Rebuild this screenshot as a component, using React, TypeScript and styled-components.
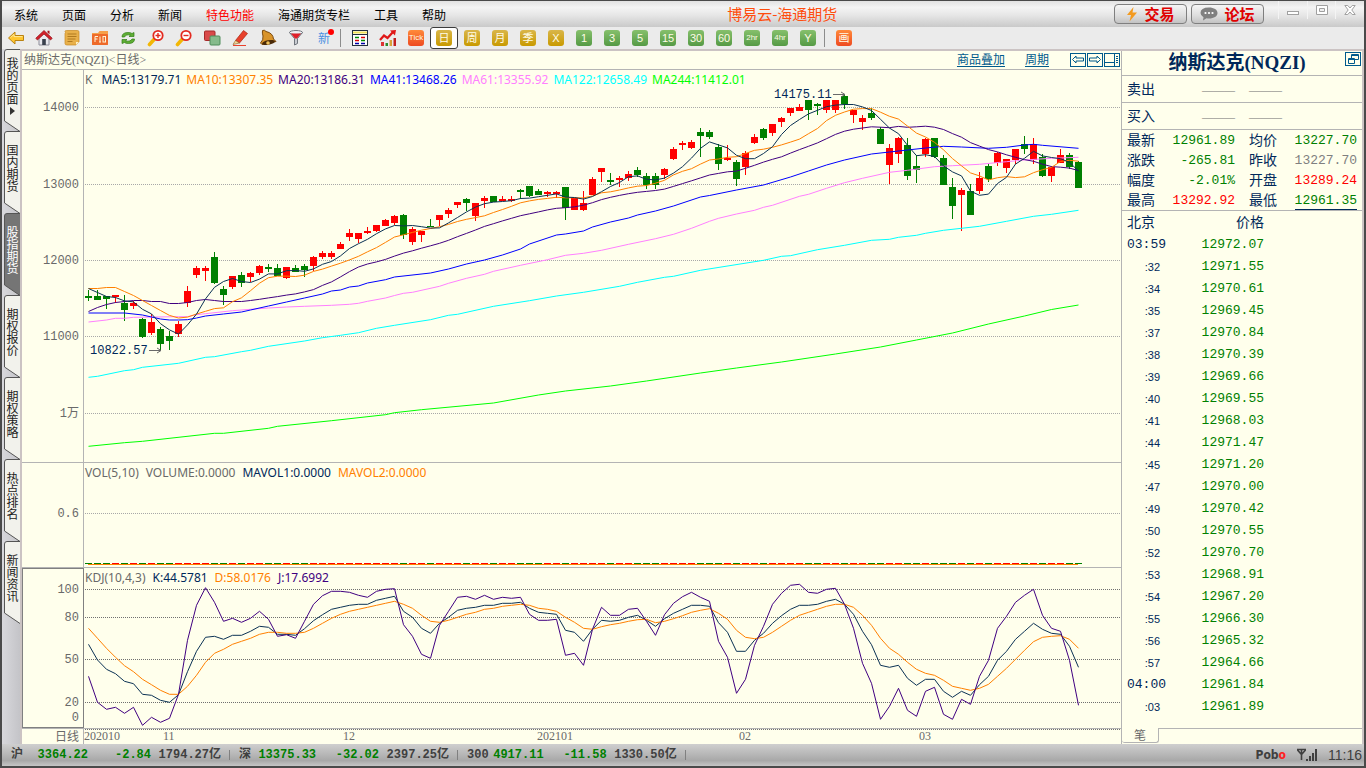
import React from 'react';
import styled, { createGlobalStyle, css } from 'styled-components';

const song = '"Liberation Serif", "Noto Sans CJK SC", serif';
const hei = '"Noto Sans CJK SC", sans-serif';
const humanist = '"Noto Sans", "Open Sans", sans-serif';
const mono = '"Liberation Mono", "Noto Sans CJK SC", monospace';

const c = {
  paper: '#ffffec',
  line: '#b4b4b4',
  frame: '#4a4a4a',
  edge: '#cbc3c3',
  grey: '#696969',
  navy: '#00285a',
  orange: '#ff8000',
  violet: '#400080',
  blue: '#0000ff',
  pink: '#ff80ff',
  cyan: '#00ffff',
  lime: '#00ff00',
  red: '#ff0000',
  green: '#008000',
  link: '#005a8c',
};

const GlobalStyle = createGlobalStyle`
  * { box-sizing: border-box; }
  body { margin: 0; }
  button { margin: 0; padding: 0; border: 0; background: none; font: inherit; color: inherit; }
`;

/* ---------- frame ---------- */

const Window = styled.div`
  display: flex;
  flex-direction: column;
  min-height: 100vh;
  border: 2px solid ${c.frame};
  border-top-width: 1px;
  background: #ebebeb;
  font-family: ${hei};
  font-size: 12px;
`;

const MenuBar = styled.header`
  display: flex;
  height: 26px;
  background: linear-gradient(#e2e2e2, #f4f4f4 25%, #e6e6e6 55%, #c9c9c9);
`;

const Menu = styled.nav`
  display: flex;
  align-items: center;
  gap: 24px;
  padding: 2px 0 0 12px;
`;

const MenuItem = styled.button<{ $hot?: boolean }>`
  color: ${(p) => (p.$hot ? c.red : '#000')};
  line-height: 16px;
`;

const AppTitle = styled.h1`
  flex: 1;
  margin: 0;
  padding-left: 281px;
  font-size: 15px;
  font-weight: 400;
  line-height: 25px;
  color: #ff4d0d;
`;

const TopActions = styled.div`
  display: flex;
  gap: 4px;
  padding: 3px 14px 0 0;
`;

const PillButton = styled.button`
  display: flex;
  align-items: center;
  justify-content: center;
  gap: 6px;
  width: 73px;
  height: 20px;
  border: 1px solid #7f7f7f;
  border-radius: 4px;
  background: linear-gradient(#f6f6f6, #dcdcdc 60%, #c3c3c3);
  color: #e00000;
  font-size: 15px;
  font-weight: 700;
  line-height: 18px;
`;

const WindowControls = styled.div`
  display: flex;
  width: 86px;
  height: 18px;
`;

const WindowButton = styled.button`
  flex: 1;
  display: flex;
  align-items: center;
  justify-content: center;
  border-left: 1px solid #f4f4f4;
`;

const Toolbar = styled.div`
  display: flex;
  align-items: center;
  height: 24px;
  border-bottom: 2px solid ${c.edge};
  background: #ebebeb;
`;

const ToolButton = styled.button<{ $active?: boolean }>`
  display: flex;
  align-items: center;
  justify-content: center;
  width: 28px;
  height: 22px;
  ${(p) =>
    p.$active &&
    css`
      border: 1px solid #3c3c3c;
      border-radius: 3px;
      background: #fff;
    `}
`;

const ToolDivider = styled.span`
  width: 6px;
  height: 18px;
  margin-left: 2px;
  border-left: 1px solid #8c8c8c;
`;

const tones = {
  gold: 'linear-gradient(#d9b64a, #c99a00)',
  green: 'linear-gradient(#86c06c, #559a45)',
  fire: 'linear-gradient(#ff8a3a, #ee4a20)',
};

const Badge = styled.span<{ $tone: keyof typeof tones; $small?: boolean }>`
  width: 16px;
  height: 16px;
  border-radius: 3px;
  background: ${(p) => tones[p.$tone]};
  color: #fffbe6;
  font-family: "Liberation Sans", "Noto Sans CJK SC", sans-serif;
  font-size: ${(p) => (p.$small ? 8 : 11)}px;
  line-height: 16px;
  text-align: center;
`;

const NewMark = styled.span`
  position: relative;
  color: #4a90e2;
  font-size: 12px;
  line-height: 20px;
  &::after {
    content: '';
    position: absolute;
    top: 1px;
    right: -4px;
    width: 6px;
    height: 6px;
    border-radius: 50%;
    background: #ff0000;
  }
`;

const Main = styled.main`
  flex: 1;
  display: flex;
  border-right: 2px solid ${c.edge};
`;

/* ---------- left tabs ---------- */

const SideTabs = styled.nav`
  display: flex;
  flex-direction: column;
  width: 20px;
  margin-top: -2px;
  border-right: 2px solid ${c.edge};
  padding-left: 2px;
  background: linear-gradient(90deg, #d8d8dc, #c4c4c8);
`;

const SideTab = styled.button<{ $active?: boolean }>`
  position: relative;
  height: 82px;
  padding-bottom: 8px;
  color: ${(p) => (p.$active ? '#fff' : '#222')};
`;

const TabShape = styled.svg`
  position: absolute;
  left: 0;
  top: 0;
`;

const TabText = styled.span`
  display: flex;
  flex-direction: column;
  align-items: center;
  justify-content: center;
  gap: 2px;
  position: relative;
  height: 100%;
  font-size: 12px;
  line-height: 12px;
`;

const TabChars = styled.span`
  writing-mode: vertical-rl;
  line-height: 16px;
  height: 48px;
`;

/* ---------- charts ---------- */

const ChartArea = styled.section`
  flex: 1;
  min-width: 0;
  display: flex;
  flex-direction: column;
  background: ${c.paper};
  overflow: hidden;
`;

const ChartHeader = styled.div`
  display: flex;
  align-items: center;
  height: 19px;
  padding: 0 1px 0 2px;
  border-bottom: 1px solid ${c.line};
  font-family: ${song};
`;

const ChartName = styled.h2`
  flex: 1;
  margin: 0;
  font-size: 12px;
  font-weight: 400;
  line-height: 18px;
  color: ${c.grey};
`;

const HeaderLinks = styled.div`
  display: flex;
  gap: 20px;
  padding-right: 21px;
`;

const HeaderLink = styled.a`
  color: ${c.link};
  text-decoration: underline;
  text-underline-offset: 2px;
  line-height: 18px;
`;

const BoxButtons = styled.div`
  display: flex;
  gap: 1px;
`;

const BoxButton = styled.button`
  display: flex;
  width: 16px;
  height: 14px;
`;

const Panel = styled.div<{ $height?: number }>`
  display: grid;
  grid-template-columns: 62px 1fr;
  grid-template-rows: minmax(0, 1fr);
  border-bottom: 1px solid ${c.line};
  ${(p) =>
    p.$height
      ? css`
          height: ${p.$height}px;
        `
      : css`
          flex: 1;
          min-height: 393px;
        `}
`;

const Axis = styled.div<{ $boxed?: boolean }>`
  ${(p) => (p.$boxed ? 'border: 1px solid #808080;' : `border-right: 1px solid ${c.line};`)}
`;

const AxisSvg = styled.svg`
  display: block;
  width: 100%;
  height: 100%;
  overflow: visible;
  text {
    font-family: ${mono};
    font-size: 12px;
    fill: ${c.grey};
    text-anchor: end;
  }
`;

const Plot = styled.div`
  display: flex;
  flex-direction: column;
  min-width: 0;
`;

const Legend = styled.div<{ $gap: number }>`
  display: flex;
  gap: ${(p) => p.$gap}px;
  height: 18px;
  padding-left: 1px;
  font-family: ${humanist};
  font-size: 12px;
  line-height: 19px;
  white-space: nowrap;
`;

const LegendItem = styled.span<{ $color: string; $wide?: boolean }>`
  color: ${(p) => p.$color};
  ${(p) => p.$wide && 'padding-right: 4px;'}
`;

const PlotSvg = styled.svg`
  display: block;
  flex: 1;
  width: 100%;
  min-height: 0;
  overflow: visible;
  text {
    font-family: ${mono};
    font-size: 12px;
    fill: ${c.navy};
  }
`;

const TimeRow = styled.div`
  display: grid;
  grid-template-columns: 62px 1fr;
  height: 15px;
`;

const TimeUnit = styled.span`
  padding-right: 4px;
  border-right: 1px solid ${c.line};
  color: ${c.grey};
  font-size: 12px;
  line-height: 14px;
  text-align: right;
`;

const TimeSvg = styled.svg`
  display: block;
  width: 100%;
  height: 15px;
  text {
    font-family: ${song};
    font-size: 12px;
    fill: ${c.grey};
  }
`;

/* ---------- quote side ---------- */

const QuotePane = styled.aside`
  display: flex;
  flex-direction: column;
  width: 241px;
  border-left: 1px solid ${c.line};
  background: ${c.paper};
  font-family: ${mono};
  color: ${c.navy};
`;

const QuoteHead = styled.div`
  display: flex;
  position: relative;
  justify-content: center;
  height: 25px;
  border-bottom: 1px solid ${c.line};
`;

const QuoteName = styled.h2`
  margin: 0;
  padding-right: 10px;
  font-family: ${song};
  font-size: 19px;
  font-weight: 700;
  line-height: 24px;
`;

const CascadeButton = styled.button`
  position: absolute;
  top: 1px;
  right: 1px;
  display: flex;
`;

const BookRow = styled.div`
  display: grid;
  grid-template-columns: 75px 47px 1fr;
  align-items: center;
  height: 27px;
  padding: 2px 0 0 5px;
  border-bottom: 1px solid ${c.line};
  font-size: 14px;
  line-height: 24px;
`;

const Dashes = styled.span`
  color: #707070;
  font-family: ${song};
  font-size: 11px;
`;

const QuoteTable = styled.table`
  width: 236px;
  margin-left: 5px;
  table-layout: fixed;
  border-collapse: collapse;
  th,
  td {
    height: 20px;
    padding: 2px 0 0;
    line-height: 18px;
  }
  th {
    font-size: 14px;
    font-weight: 400;
    text-align: left;
  }
  td {
    font-size: 13px;
    text-align: right;
  }
`;

const LabelPad = styled.span`
  padding-left: 14px;
`;

const Num = styled.span<{ $color: string; $mark?: boolean }>`
  display: inline-block;
  color: ${(p) => p.$color};
  line-height: ${(p) => (p.$mark ? 16 : 18)}px;
  ${(p) => p.$mark && `border-bottom: 1px solid ${c.navy};`}
`;

const TickArea = styled.div`
  flex: 1;
  border-top: 1px solid ${c.line};
`;

const TickTable = styled.table`
  width: 137px;
  margin: 1px 0 0 5px;
  table-layout: fixed;
  border-collapse: collapse;
  th,
  td {
    height: 22px;
    padding: 0;
    line-height: 22px;
  }
  th {
    font-size: 14px;
    font-weight: 400;
    text-align: left;
  }
  th:last-child {
    text-align: right;
  }
`;

const TimeCell = styled.td<{ $minute: boolean }>`
  ${(p) =>
    p.$minute
      ? 'font-size: 13px;'
      : 'font-family: "Liberation Sans", sans-serif; font-size: 11px; text-align: right;'}
`;

const PriceCell = styled.td`
  color: ${c.green};
  font-size: 13px;
  text-align: right;
`;

const TimeText = styled.span<{ $minute: boolean }>`
  padding-right: ${(p) => (p.$minute ? 0 : 7)}px;
`;

const PaneTabs = styled.div`
  display: flex;
  height: 16px;
`;

const PaneTab = styled.button`
  width: 37px;
  height: 15px;
  border: 1px solid ${c.line};
  border-width: 0 1px 1px 0;
  border-radius: 0 0 3px 3px;
  color: ${c.grey};
  font-family: ${hei};
  font-size: 12px;
  line-height: 14px;
`;

const PaneTabLine = styled.span`
  flex: 1;
  border-top: 1px solid ${c.line};
`;

/* ---------- status bar ---------- */

const StatusBar = styled.footer`
  display: flex;
  align-items: center;
  height: 22px;
  padding: 0 2px 0 9px;
  background: linear-gradient(#cfcfcf, #b0b0b0 60%, #a8a8a8 75%, #c6c6c6);
  color: #404040;
  font-family: ${mono};
  font-size: 12px;
  font-weight: 700;
  line-height: 24px;
  white-space: nowrap;
`;

const IndexGroup = styled.div`
  display: flex;
  padding-right: 9px;
  margin-right: 9px;
  background: linear-gradient(#808080, #808080) right center / 1px 10px no-repeat;
`;

const IndexPrice = styled.span<{ $width: number }>`
  width: ${(p) => p.$width}px;
  color: ${c.green};
  text-align: right;
`;

const IndexChange = styled.span`
  width: 63px;
  color: ${c.green};
  text-align: right;
`;

const IndexVolume = styled.span`
  width: 70px;
  text-align: right;
`;

const StatusRight = styled.div`
  display: flex;
  align-items: center;
  gap: 10px;
  margin-left: auto;
  font-family: "Liberation Sans", sans-serif;
  font-weight: 400;
  font-size: 14px;
`;

const Brand = styled.span`
  font-family: "DejaVu Sans Condensed", "DejaVu Sans", sans-serif;
  font-size: 12px;
  font-weight: 700;
  em {
    color: #ff2020;
    font-style: normal;
  }
`;

/* ---------- market data ---------- */

const STEP = 9;
const FIRST = 4;
const cx = (i: number) => FIRST + STEP * i + 0.5;

type Bar = [up: 0 | 1, high: number, top: number, bottom: number, low: number];

const R = 1;
const G = 0;

const bars: Bar[] = [
  [G, 290, 296, 298, 301], [G, 290, 296, 300, 300], [G, 296, 296, 299, 309], [R, 295, 295, 297, 303],
  [G, 295, 303, 310, 321], [R, 301, 303, 306, 309], [G, 318, 319, 337, 338], [R, 314, 322, 333, 335],
  [G, 327, 329, 344, 351], [G, 331, 336, 341, 350], [R, 321, 324, 334, 337], [R, 286, 291, 303, 307],
  [R, 266, 268, 275, 278], [R, 266, 268, 271, 281], [G, 252, 257, 283, 284], [G, 286, 289, 295, 305],
  [R, 276, 276, 287, 289], [G, 272, 275, 283, 287], [R, 272, 273, 277, 282], [R, 265, 266, 273, 275],
  [G, 264, 267, 269, 272], [G, 264, 268, 276, 276], [R, 267, 267, 278, 279], [G, 265, 268, 272, 272],
  [G, 264, 266, 270, 277], [R, 256, 257, 266, 271], [R, 251, 253, 257, 259], [R, 251, 253, 257, 259],
  [R, 242, 244, 249, 249], [R, 229, 233, 237, 241], [R, 233, 233, 239, 243], [R, 227, 231, 233, 234],
  [R, 225, 225, 231, 232], [R, 219, 220, 226, 226], [R, 215, 216, 223, 225], [G, 214, 215, 235, 239],
  [R, 227, 229, 242, 245], [R, 231, 231, 235, 242], [G, 219, 226, 227, 227], [R, 215, 215, 220, 226],
  [R, 208, 210, 214, 218], [R, 202, 202, 205, 208], [G, 198, 199, 203, 211], [R, 203, 203, 216, 221],
  [R, 196, 198, 201, 208], [G, 196, 196, 202, 202], [R, 196, 199, 201, 201], [R, 196, 199, 201, 202],
  [G, 189, 190, 192, 199], [G, 186, 186, 196, 197], [G, 189, 191, 195, 195], [R, 191, 192, 194, 197],
  [R, 191, 192, 194, 198], [G, 187, 187, 208, 220], [R, 198, 198, 210, 210], [R, 191, 203, 210, 211],
  [R, 177, 179, 195, 195], [R, 168, 168, 172, 182], [G, 173, 180, 182, 185], [R, 176, 178, 180, 187],
  [R, 171, 174, 178, 181], [G, 167, 170, 175, 177], [G, 173, 176, 185, 189], [G, 173, 176, 185, 189],
  [R, 168, 169, 175, 179], [R, 147, 149, 159, 160], [R, 141, 143, 145, 150], [R, 140, 142, 148, 149],
  [G, 128, 132, 136, 157], [G, 130, 132, 137, 139], [G, 144, 147, 164, 170], [R, 145, 158, 160, 161],
  [G, 160, 162, 179, 186], [R, 151, 153, 167, 175], [R, 134, 137, 143, 144], [G, 128, 129, 138, 140],
  [R, 124, 124, 133, 136], [R, 117, 118, 122, 127], [R, 108, 108, 113, 116], [R, 104, 107, 111, 111],
  [G, 100, 100, 110, 120], [G, 103, 104, 106, 115], [R, 100, 100, 110, 113], [R, 100, 100, 110, 113],
  [G, 94, 96, 104, 109], [R, 110, 110, 115, 123], [R, 115, 118, 122, 130], [G, 108, 113, 118, 120],
  [G, 127, 129, 144, 144], [R, 144, 148, 165, 184], [R, 137, 138, 154, 163], [G, 138, 145, 176, 180],
  [G, 155, 166, 170, 183], [R, 138, 139, 154, 157], [G, 138, 138, 157, 158], [G, 155, 158, 185, 185],
  [G, 178, 187, 206, 219], [R, 188, 190, 195, 231], [G, 184, 191, 215, 215], [R, 172, 178, 191, 194],
  [G, 164, 166, 179, 182], [R, 152, 153, 163, 166], [R, 159, 159, 168, 173], [R, 149, 149, 160, 164],
  [G, 136, 144, 149, 154], [R, 138, 144, 160, 164], [G, 154, 157, 176, 177], [R, 166, 167, 176, 182],
  [R, 149, 155, 163, 163], [G, 153, 155, 167, 169], [G, 161, 162, 188, 188],
];

/* Bars and averages share one vertical scale; the plot begins at level 88, its axis at 70. */
const PLOT_TOP = 88;
const AXIS_TOP = 70;

const closes = bars.map(([up, , top, bottom]) => (up ? top : bottom));

/* Averages need earlier sessions for their first values, which are given as lead. */
const average = (n: number, lead: number[]) =>
  closes.map((_, i) =>
    i < lead.length ? lead[i] : closes.slice(i - n + 1, i + 1).reduce((a, b) => a + b, 0) / n,
  );

const everyBar = (ys: number[]) => ys.map((y, i) => `${cx(i)},${(y + 0.5 - PLOT_TOP).toFixed(1)}`).join(' ');
const atBars = (pts: number[][]) => pts.map(([i, y]) => `${cx(i)},${y - PLOT_TOP}`).join(' ');

const ma5 = average(5, [288, 292, 296, 297]);
const ma10 = average(10, [288, 288, 287, 287, 291, 295, 300, 305, 310]);
const ma20 = average(20, [311, 307, 304, 302, 301, 300, 300, 301, 301, 303, 303, 302, 300, 299, 300, 301, 301, 301, 300]);

const ma41 = [
  [0, 313], [4, 313], [6, 315], [7, 317], [8, 319], [9, 320], [10, 320], [11, 319.7], [12, 318], [13, 316], [15, 314],
  [17, 312], [18, 310], [20, 306], [22, 302], [24, 298], [26, 294], [27, 291], [28, 290], [29, 287], [30, 286],
  [31, 283], [33, 279.7], [34, 277], [38, 273], [40, 269], [42, 264], [44, 260], [46, 255], [48, 249], [49, 244],
  [52, 235], [53, 234], [55, 231], [56, 227], [58, 222], [60, 218], [61, 215], [63, 211], [65, 206], [68, 197],
  [69, 195.5], [72, 190], [75, 185], [78, 177], [80, 171], [82, 165], [84, 160], [87, 154], [89, 152], [91, 150],
  [93, 148], [95, 146.3], [97, 147], [100, 148.3], [102, 147.3], [104, 145], [105, 144.3], [106, 145.3], [110, 148.3],
];
const ma61 = [
  [0, 322], [2, 320], [3, 318.3], [4, 318.3], [5, 317.3], [10, 316.7], [11, 316.7], [12, 314.7], [13, 313.7],
  [16, 310.7], [18, 309.3], [20, 308], [22, 307], [24, 306.3], [27, 305.3], [29, 304.3], [30, 303.3], [31, 301.3],
  [33, 298], [34, 295.5], [35, 293.3], [36, 292.3], [39, 286.3], [40, 283.3], [42, 278.3], [44, 274.3], [45, 271.3],
  [48, 265.3], [51, 259.7], [53, 255.3], [55, 253.3], [57, 250.3], [60, 244.3], [63, 238.7], [65, 234.3], [67, 228.3],
  [69, 221.3], [70, 218.3], [72, 214], [74, 210.3], [75, 207.3], [76, 205.3], [79, 196.3], [80, 194.3], [82, 188.3],
  [84, 182.7], [86, 178.3], [89, 172.3], [91, 170.3], [94, 166.7], [96, 165.7], [99, 164.3], [102, 161.7], [104, 160],
  [107, 158.3], [110, 157.3],
];
const ma122 = [
  [0, 377.3], [1, 376.3], [4, 370.7], [5, 369.7], [6, 367.3], [10, 363.3], [13, 357.3], [14, 356.7], [17, 351.7],
  [18, 350.3], [20, 346.3], [24, 341], [26, 337.7], [28, 335.3], [30, 332.7], [32, 328.3], [34, 325.3], [38, 319.7],
  [40, 315.3], [41, 314.3], [45, 306.3], [49, 300.7], [52, 296], [55, 292.3], [59, 286.3], [61, 282.3], [64, 277.3],
  [65, 276.3], [68, 270.3], [75, 260.3], [77, 256.3], [78, 255.7], [81, 249.7], [84, 245.3], [87, 240.3], [89, 239.3],
  [90, 237.3], [92, 235.3], [93, 233.3], [95, 230.3], [99, 226.3], [102, 221.3], [105, 216.3], [107, 214.3], [110, 210.3],
];
const ma244 = [
  [0, 446.3], [4, 442.7], [6, 441.3], [14, 433.3], [15, 433.3], [20, 428.3], [21, 426.3], [27, 420.7], [33, 414.7],
  [34, 412.7], [37, 409.7], [45, 403], [50, 395], [53, 391], [58, 386], [62, 381], [68, 373], [72, 368], [77, 362],
  [83, 354], [88, 347], [92, 340], [96, 333], [100, 324], [104, 316], [107, 309.5], [110, 305],
];

const priceLines = [
  { color: c.lime, points: atBars(ma244) },
  { color: c.cyan, points: atBars(ma122) },
  { color: c.pink, points: atBars(ma61) },
  { color: c.blue, points: atBars(ma41) },
  { color: c.violet, points: everyBar(ma20) },
  { color: c.orange, points: everyBar(ma10) },
  { color: '#0b3254', points: everyBar(ma5) },
];

const priceTicks = [
  { label: '14000', y: 107 }, { label: '13000', y: 184 }, { label: '12000', y: 260 },
  { label: '11000', y: 336 }, { label: '1万', y: 413 },
];

/* Oscillator samples, three units to the pixel. */
const kLine = [
  253, 300, 328, 341, 364, 371, 403, 406, 421, 427, 404, 335, 274, 232, 229, 238, 226, 226, 214, 199, 202, 223, 223,
  226, 206, 182, 164, 148, 142, 136, 133, 133, 121, 115, 109, 154, 172, 205, 220, 190, 172, 151, 145, 142, 136, 136,
  130, 130, 127, 145, 157, 160, 163, 211, 217, 244, 208, 181, 184, 181, 172, 166, 181, 199, 176, 160, 148, 136, 136,
  139, 188, 217, 274, 274, 241, 220, 190, 167, 148, 136, 136, 133, 124, 118, 133, 163, 214, 254, 316, 322, 316, 355,
  376, 358, 358, 394, 412, 394, 406, 374, 349, 301, 274, 238, 214, 190, 208, 220, 223, 259, 322,
];
const dLine = [
  205, 235, 265, 292, 317, 335, 358, 374, 391, 403, 403, 379, 346, 307, 280, 268, 253, 244, 235, 223, 217, 217, 220,
  220, 217, 205, 190, 175, 163, 154, 148, 142, 136, 130, 124, 133, 145, 166, 184, 187, 181, 172, 163, 157, 148, 145,
  139, 136, 133, 136, 145, 148, 154, 172, 187, 205, 208, 200, 194, 190, 184, 179, 178, 188, 184, 176, 167, 157, 151,
  146, 160, 178, 211, 232, 236, 232, 217, 199, 181, 166, 157, 148, 139, 133, 133, 142, 166, 196, 235, 265, 283, 307,
  328, 340, 346, 361, 379, 385, 391, 385, 373, 349, 325, 298, 271, 245, 232, 229, 227, 238, 265,
];
const jLine = [
  349, 427, 448, 442, 460, 442, 496, 472, 487, 475, 403, 241, 136, 83, 127, 184, 175, 187, 175, 154, 178, 229, 224,
  235, 184, 133, 107, 94, 94, 97, 106, 112, 94, 88, 86, 194, 229, 283, 295, 196, 154, 112, 109, 118, 106, 118, 112,
  115, 112, 163, 181, 181, 178, 286, 280, 316, 208, 142, 166, 166, 148, 145, 184, 226, 164, 130, 110, 97, 112, 124,
  244, 292, 400, 358, 256, 199, 133, 100, 76, 73, 97, 100, 88, 85, 133, 205, 310, 370, 478, 439, 385, 451, 469, 394,
  382, 463, 478, 418, 433, 349, 301, 205, 169, 127, 106, 88, 166, 205, 214, 301, 436,
];
const oscPoints = (v: number[]) => v.map((y, i) => `${cx(i)},${(y / 3 - 26).toFixed(1)}`).join(' ');

const kdjTicks = [
  { label: '100', y: 21, grid: true }, { label: '80', y: 49, grid: true }, { label: '50', y: 91, grid: true },
  { label: '20', y: 134, grid: true }, { label: '0', y: 149, grid: false },
];

const months = [
  { label: '202010', x: 0 }, { label: '11', x: 79 }, { label: '12', x: 259 },
  { label: '202101', x: 453 }, { label: '02', x: 655 }, { label: '03', x: 835 },
];

const ticks: [string, string][] = [
  ['03:59', '12972.07'], [':32', '12971.55'], [':34', '12970.61'], [':35', '12969.45'], [':37', '12970.84'],
  [':38', '12970.39'], [':39', '12969.66'], [':40', '12969.55'], [':41', '12968.03'], [':44', '12971.47'],
  [':45', '12971.20'], [':47', '12970.00'], [':49', '12970.42'], [':50', '12970.55'], [':52', '12970.70'],
  [':53', '12968.91'], [':54', '12967.20'], [':55', '12966.30'], [':56', '12965.32'], [':57', '12964.66'],
  ['04:00', '12961.84'], [':03', '12961.89'],
];

const quotes = [
  ['最新', '12961.89', c.green, '均价', '13227.70', c.green],
  ['涨跌', '-265.81', c.green, '昨收', '13227.70', '#808080'],
  ['幅度', '-2.01%', c.green, '开盘', '13289.24', c.red],
  ['最高', '13292.92', c.red, '最低', '12961.35', c.green],
];

const indices = [
  { name: '沪', price: '3364.22', width: 65, change: '-2.84', volume: '1794.27亿' },
  { name: '深', price: '13375.33', width: 65, change: '-32.02', volume: '2397.25亿' },
  { name: '300', price: '4917.11', width: 55, change: '-11.58', volume: '1330.50亿' },
];

/* ---------- icons ---------- */

const Icon = ({ children }: { children: React.ReactNode }) => (
  <svg width="18" height="18" viewBox="0 0 18 18" aria-hidden="true">
    {children}
  </svg>
);

const BackIcon = () => (
  <Icon>
    <path d="M1.5 9 8 3v3.5h8.5v5H8V15z" fill="#ffc62e" stroke="#b98212" />
    <path d="M3.5 8.6 7 5.4v2.2h8.5" fill="none" stroke="#ffe99a" />
  </Icon>
);
const HomeIcon = () => (
  <Icon>
    <path d="M4 8v8h10V8L9 4z" fill="#e9e9ee" stroke="#8d8d99" />
    <path d="M.8 9.2 9 1.5l8.2 7.7-1.6 1.8L9 5l-6.600 6z" fill="#d3202a" stroke="#8f1018" strokeWidth=".7" />
    <path d="M12.5 1.8h2v3.4l-2-1.8z" fill="#a5141c" />
    <rect x="7.2" y="10" width="3.6" height="6" fill="#39404d" />
  </Icon>
);
const NoteIcon = () => (
  <Icon>
    <path d="M2 2.5q1 1 0 2v10q0 1.5 2 1.5h9l3-3V3q0-1.500-1.500-1.500H3.500Q2 1.500 2 2.500z" fill="#e8b04a" stroke="#c98a22" strokeWidth=".7" />
    <path d="M4.500 5h9M4.500 7.500h9M4.500 10h8M4.500 12.500h5" stroke="#b07a20" />
    <path d="M13 16v-3h3z" fill="#fff0c4" />
  </Icon>
);
const F10Icon = () => (
  <Icon>
    <path d="M1 4h6l1.500-2H17v14H1z" fill="#f6a04a" />
    <rect x="1" y="5" width="16" height="11" rx="1" fill="#ee6a2a" />
    <path d="M4 13V7.500h3M4 10h2.500M9 7.500V13M8 13h2" stroke="#fff4d6" fill="none" />
    <rect x="12" y="7.500" width="2.500" height="5.500" stroke="#fff4d6" fill="none" />
  </Icon>
);
const RefreshIcon = () => (
  <Icon>
    <path d="M3 8q0-4.500 6-4.500 3 0 4 1l2-1v4h-5l1.500-1.300Q7 5 5.500 8z" fill="#5fae35" stroke="#2f7d16" strokeWidth=".7" />
    <path d="M15.500 10q0 4.500-6 4.500-3 0-4-1l-2.500 1v-4h5l-1.500 1.300q5 1.200 6.500-1.800z" fill="#5fae35" stroke="#2f7d16" strokeWidth=".7" />
  </Icon>
);
const ZoomIcon = ({ plus }: { plus?: boolean }) => (
  <Icon>
    <path d="m2.500 15.500 4.500-5" stroke="#f2b705" strokeWidth="3.600" strokeLinecap="round" />
    <circle cx="11" cy="6.500" r="4.700" fill="#fff" stroke="#e32a20" strokeWidth="1.800" />
    <path d={plus ? 'M8.500 6.500h5M11 4v5' : 'M8.500 6.500h5'} stroke="#e32a20" strokeWidth="1.400" />
  </Icon>
);
const OverlayIcon = () => (
  <Icon>
    <rect x="1.500" y="2" width="10.500" height="9.500" rx="1" fill="#d94a4a" stroke="#a52a2a" />
    <rect x="7" y="7" width="10" height="9" rx="1" fill="#86bb8c" stroke="#4f8d5a" />
  </Icon>
);
const PencilIcon = () => (
  <Icon>
    <path d="m4.500 11.500 8-10 4 3-8 9.500z" fill="#e8412c" stroke="#a8230f" strokeWidth=".7" />
    <path d="M2 15.500 4.500 11.500l4 2.500z" fill="#f6d59a" stroke="#8a5a1c" strokeWidth=".6" />
    <path d="M2 16.500h13" stroke="#e8412c" />
  </Icon>
);
const BellIcon = () => (
  <Icon>
    <path d="M3.500 1.500q2-1 3.500 1 7 1.500 7.500 7.500l2.500 2.500L3 15.500 1.500 14q3-3 2.500-7-1-3-.500-5.500z" fill="#d9942b" stroke="#7c4a0c" />
    <ellipse cx="9.500" cy="13.500" rx="6.500" ry="2.300" transform="rotate(-10 9.500 13.500)" fill="#4a2a08" />
    <circle cx="9" cy="14" r="1.800" fill="#f0c25a" />
  </Icon>
);
const FunnelIcon = () => (
  <Icon>
    <path d="M2.500 3.500 7.500 9.500V16l3-1.500v-5l5-6z" fill="#c9ccd2" stroke="#70757d" />
    <ellipse cx="9" cy="3.500" rx="6.500" ry="2" fill="#eef0f3" stroke="#70757d" />
    <path d="M4 4.500h10L10 9.500H8z" fill="#e0202a" />
  </Icon>
);
const SheetIcon = () => (
  <Icon>
    <rect x="1.500" y="1.500" width="15" height="15" fill="#fff" stroke="#23303f" />
    <path d="M2 3.500h14" stroke="#f2e25a" strokeWidth="2" />
    <path d="M2 5.500h14" stroke="#23303f" />
    <path d="M4 8.500h4" stroke="#080" strokeWidth="1.500" /><path d="M10 8.500h4" stroke="#d00" strokeWidth="1.500" />
    <path d="M4 11.500h4" stroke="#d00" strokeWidth="1.500" /><path d="M10 11.500h4" stroke="#080" strokeWidth="1.500" />
    <path d="M4 14.500h4" stroke="#00a" strokeWidth="1.500" /><path d="M10 14.500h4" stroke="#00a" strokeWidth="1.500" />
  </Icon>
);
const TrendIcon = () => (
  <Icon>
    <path d="M1 11 5 6.500l3.500 2.500L14 3" fill="none" stroke="#e01818" strokeWidth="2.200" />
    <path d="m11 1.500 6-.500-1 5.500z" fill="#e01818" />
    <path d="M2 13h3v4H2z" fill="#d33" /><path d="M6.500 14h2.500v3H6.500z" fill="#2c8a2c" />
    <path d="M10.500 11h2.500v6h-2.500z" fill="#d9a23a" /><path d="M14.500 9h2.500v8h-2.500z" fill="#c02020" />
  </Icon>
);

const periods: { text: string; tone: keyof typeof tones; small?: boolean; active?: boolean }[] = [
  { text: 'Tick', tone: 'fire', small: true }, { text: '日', tone: 'gold', active: true }, { text: '周', tone: 'gold' },
  { text: '月', tone: 'gold' }, { text: '季', tone: 'gold' }, { text: 'X', tone: 'gold' }, { text: '1', tone: 'green' },
  { text: '3', tone: 'green' }, { text: '5', tone: 'green' }, { text: '15', tone: 'green' }, { text: '30', tone: 'green' },
  { text: '60', tone: 'green' }, { text: '2hr', tone: 'green', small: true }, { text: '4hr', tone: 'green', small: true },
  { text: 'Y', tone: 'green' },
];

const leftTools = [
  ['后退', <BackIcon />], ['主页', <HomeIcon />], ['记事', <NoteIcon />], ['资料', <F10Icon />], ['刷新', <RefreshIcon />],
  ['放大', <ZoomIcon plus />], ['缩小', <ZoomIcon />], ['叠加', <OverlayIcon />], ['画线', <PencilIcon />],
  ['预警', <BellIcon />], ['筛选', <FunnelIcon />],
] as [string, React.ReactNode][];

const menuItems = ['系统', '页面', '分析', '新闻', '特色功能', '海通期货专栏', '工具', '帮助'];
const sideTabs = ['我的页面', '国内期货', '股指期货', '期权报价', '期权策略', '热点排名', '新闻资讯'];

/* ---------- parts ---------- */

const Grid = ({ y, color = '#a8a8a8' }: { y: number; color?: string }) => (
  <line x1="1" x2="100%" y1={y + 0.5} y2={y + 0.5} stroke={color} strokeDasharray="1 1" shapeRendering="crispEdges" />
);

const Arrow = ({ x, y }: { x: number; y: number }) => (
  <path d={`M${x} ${y + 0.5}h12M${x + 8} ${y - 2}l4 2.500l-4 2.500`} fill="none" stroke={c.grey} />
);

const PriceChart = () => (
  <Panel>
    <Axis>
      <AxisSvg>
        {priceTicks.map((t) => (
          <text key={t.label} x="57" y={t.y - AXIS_TOP + 4}>{t.label}</text>
        ))}
      </AxisSvg>
    </Axis>
    <Plot>
      <Legend $gap={5}>
        <LegendItem $color={c.grey} $wide>K</LegendItem>
        <LegendItem $color={c.navy}>MA5:13179.71</LegendItem>
        <LegendItem $color={c.orange}>MA10:13307.35</LegendItem>
        <LegendItem $color={c.violet}>MA20:13186.31</LegendItem>
        <LegendItem $color={c.blue}>MA41:13468.26</LegendItem>
        <LegendItem $color={c.pink}>MA61:13355.92</LegendItem>
        <LegendItem $color={c.cyan}>MA122:12658.49</LegendItem>
        <LegendItem $color={c.lime}>MA244:11412.01</LegendItem>
      </Legend>
      <PlotSvg>
        {priceTicks.map((t) => (
          <Grid key={t.label} y={t.y - PLOT_TOP} />
        ))}
        <g shapeRendering="crispEdges">
          {bars.map(([up, high, top, bottom, low], i) => {
            const x = FIRST + STEP * i;
            return (
              <g key={i} fill={up ? c.red : c.green}>
                <rect x={x} y={high - PLOT_TOP} width="1" height={low - high} />
                <rect x={x - 3} y={top - PLOT_TOP} width="7" height={bottom - top} />
              </g>
            );
          })}
        </g>
        {priceLines.map((l) => (
          <polyline key={l.color} points={l.points} fill="none" stroke={l.color} />
        ))}
        <text x="6" y="266">10822.57</text>
        <Arrow x={65} y={262} />
        <text x="690" y="10">14175.11</text>
        <Arrow x={749} y={6} />
      </PlotSvg>
    </Plot>
  </Panel>
);

const VolumeChart = () => (
  <Panel $height={105}>
    <Axis>
      <AxisSvg><text x="57" y="54">0.6</text></AxisSvg>
    </Axis>
    <Plot>
      <Legend $gap={7}>
        <LegendItem $color={c.grey}>VOL(5,10)</LegendItem>
        <LegendItem $color={c.grey}>VOLUME:0.0000</LegendItem>
        <LegendItem $color={c.navy}>MAVOL1:0.0000</LegendItem>
        <LegendItem $color={c.orange}>MAVOL2:0.0000</LegendItem>
      </Legend>
      <PlotSvg shapeRendering="crispEdges">
        <Grid y={32} />
        <rect x="4" y="83" width={STEP * 110} height="1" fill={c.orange} />
        {bars.map(([up], i) => (
          <rect key={i} x={1 + STEP * i} y="82" width="7" height="1" fill={up ? c.red : c.green} />
        ))}
      </PlotSvg>
    </Plot>
  </Panel>
);

const KdjChart = () => (
  <Panel $height={161}>
    <Axis $boxed>
      <AxisSvg>
        {kdjTicks.map((t) => (
          <text key={t.label} x="56" y={t.y + 3}>{t.label}</text>
        ))}
      </AxisSvg>
    </Axis>
    <Plot>
      <Legend $gap={7}>
        <LegendItem $color={c.grey}>KDJ(10,4,3)</LegendItem>
        <LegendItem $color={c.navy}>K:44.5781</LegendItem>
        <LegendItem $color={c.orange}>D:58.0176</LegendItem>
        <LegendItem $color={c.violet}>J:17.6992</LegendItem>
      </Legend>
      <PlotSvg>
        {kdjTicks.filter((t) => t.grid).map((t) => (
          <Grid key={t.label} y={t.y - 18} color="#707070" />
        ))}
        <polyline points={oscPoints(kLine)} fill="none" stroke="#0b3254" />
        <polyline points={oscPoints(dLine)} fill="none" stroke={c.orange} />
        <polyline points={oscPoints(jLine)} fill="none" stroke={c.violet} />
      </PlotSvg>
    </Plot>
  </Panel>
);

const App = () => (
  <>
    <GlobalStyle />
    <Window>
      <MenuBar>
        <Menu>
          {menuItems.map((m) => (
            <MenuItem key={m} $hot={m === '特色功能'}>{m}</MenuItem>
          ))}
        </Menu>
        <AppTitle>博易云-海通期货</AppTitle>
        <TopActions>
          <PillButton>
            <svg width="12" height="16" viewBox="0 0 12 16" aria-hidden="true">
              <path d="M7.500 1 1 9h4l-1.500 6.500L11 6.500H6.500z" fill="#f39a1f" />
            </svg>
            交易
          </PillButton>
          <PillButton>
            <svg width="18" height="14" viewBox="0 0 18 14" aria-hidden="true">
              <path d="M9 .500c5 0 8.500 2.300 8.500 5.500S14 11.500 9 11.500q-1.500 0-2.500-.300L3 13.500l.500-3.300Q.500 8.700.500 6 .500.500 9 .500z" fill="#808080" />
              <circle cx="5.500" cy="6" r="1.100" fill="#fff" /><circle cx="9" cy="6" r="1.100" fill="#fff" /><circle cx="12.500" cy="6" r="1.100" fill="#fff" />
            </svg>
            论坛
          </PillButton>
        </TopActions>
        <WindowControls>
          <WindowButton aria-label="最小化">
            <svg width="12" height="14" viewBox="0 0 12 14"><rect x=".5" y="8.500" width="11" height="3" fill="#fff" stroke="#a0a0a0" /></svg>
          </WindowButton>
          <WindowButton aria-label="最大化">
            <svg width="12" height="12" viewBox="0 0 12 12">
              <path d="M.5 1.500h11v9H.5zM3.500 4.500h5v3h-5z" fill="#fff" fillRule="evenodd" stroke="#a0a0a0" />
            </svg>
          </WindowButton>
          <WindowButton aria-label="关闭">
            <svg width="12" height="12" viewBox="0 0 12 12">
              <path d="M.8 1.500h3L6 4l2.200-2.500h3L7.800 6l3.400 4.500h-3L6 8l-2.200 2.500h-3L4.200 6z" fill="#fff" stroke="#a0a0a0" />
            </svg>
          </WindowButton>
        </WindowControls>
      </MenuBar>

      <Toolbar>
        {leftTools.map(([name, icon]) => (
          <ToolButton key={name} aria-label={name}>{icon}</ToolButton>
        ))}
        <ToolButton><NewMark>新</NewMark></ToolButton>
        <ToolDivider />
        <ToolButton aria-label="报价"><SheetIcon /></ToolButton>
        <ToolButton aria-label="走势"><TrendIcon /></ToolButton>
        {periods.map((p) => (
          <ToolButton key={p.text} $active={p.active}>
            <Badge $tone={p.tone} $small={p.small}>{p.text}</Badge>
          </ToolButton>
        ))}
        <ToolDivider />
        <ToolButton><Badge $tone="fire">画</Badge></ToolButton>
      </Toolbar>

      <Main>
        <SideTabs>
          {sideTabs.map((name, i) => (
            <SideTab key={name} $active={i === 2}>
              <TabShape width="16" height="84" viewBox="0 0 16 84" aria-hidden="true">
                <path d="M16 .500H3Q.500.500.500 3v69L16 82.500" fill={i === 2 ? '#757575' : '#f2f2ec'} stroke="#555" />
              </TabShape>
              <TabText>
                <TabChars>{name}</TabChars>
                {i === 0 && <svg width="5" height="8" viewBox="0 0 5 8" aria-hidden="true"><path d="M0 0v8l5-4z" fill="#333" /></svg>}
              </TabText>
            </SideTab>
          ))}
        </SideTabs>

        <ChartArea>
          <ChartHeader>
            <ChartName>纳斯达克(NQZI)&lt;日线&gt;</ChartName>
            <HeaderLinks>
              <HeaderLink href="#overlay">商品叠加</HeaderLink>
              <HeaderLink href="#period">周期</HeaderLink>
            </HeaderLinks>
            <BoxButtons>
              <BoxButton aria-label="左移">
                <svg width="16" height="14" viewBox="0 0 16 14" fill="none" stroke={c.link}>
                  <rect x=".5" y=".5" width="15" height="13" /><path d="M2.500 6.500 6 3v2h7.500v3H6v2z" />
                </svg>
              </BoxButton>
              <BoxButton aria-label="右移">
                <svg width="16" height="14" viewBox="0 0 16 14" fill="none" stroke={c.link}>
                  <rect x=".5" y=".5" width="15" height="13" /><path d="M13.500 6.500 10 3v2H2.500v3H10v2z" />
                </svg>
              </BoxButton>
              <BoxButton aria-label="布局">
                <svg width="16" height="14" viewBox="0 0 16 14" fill="none" stroke={c.link}>
                  <rect x=".5" y=".5" width="15" height="13" /><path d="M10.500 0v14M0 9.500h10M12 3.500h2M12 5.500h2M12 7.500h2M12 9.500h2" />
                </svg>
              </BoxButton>
            </BoxButtons>
          </ChartHeader>
          <PriceChart />
          <VolumeChart />
          <KdjChart />
          <TimeRow>
            <TimeUnit>日线</TimeUnit>
            <TimeSvg>
              <Grid y={0} color="#707070" />
              {months.map((m) => (
                <text key={m.label} x={m.x} y="11">{m.label}</text>
              ))}
            </TimeSvg>
          </TimeRow>
        </ChartArea>

        <QuotePane>
          <QuoteHead>
            <QuoteName>纳斯达克(NQZI)</QuoteName>
            <CascadeButton aria-label="窗口">
              <svg width="16" height="14" viewBox="0 0 16 14" fill="none" stroke={c.link}>
                <rect x=".5" y=".5" width="15" height="13" /><path d="M6.500 2.500h7v5h-7zM6 3.500h8M3.500 6.500h6v5h-6zM3 7.500h7" fill={c.paper} />
              </svg>
            </CascadeButton>
          </QuoteHead>
          <BookRow><span>卖出</span><Dashes>———</Dashes><Dashes>———</Dashes></BookRow>
          <BookRow><span>买入</span><Dashes>———</Dashes><Dashes>———</Dashes></BookRow>
          <QuoteTable>
            <colgroup><col width="30" /><col width="78" /><col width="44" /><col width="78" /><col /></colgroup>
            <tbody>
              {quotes.map(([a, av, ac, b, bv, bc]) => (
                <tr key={a}>
                  <th scope="row">{a}</th>
                  <td><Num $color={ac}>{av}</Num></td>
                  <th scope="row"><LabelPad>{b}</LabelPad></th>
                  <td><Num $color={bc} $mark={b === '最低'}>{bv}</Num></td>
                </tr>
              ))}
            </tbody>
          </QuoteTable>
          <TickArea>
            <TickTable>
              <colgroup><col width="40" /><col /></colgroup>
              <thead>
                <tr><th scope="col">北京</th><th scope="col">价格</th></tr>
              </thead>
              <tbody>
                {ticks.map(([time, price]) => {
                  const minute = time.length > 3;
                  return (
                    <tr key={time}>
                      <TimeCell $minute={minute}><TimeText $minute={minute}>{time}</TimeText></TimeCell>
                      <PriceCell>{price}</PriceCell>
                    </tr>
                  );
                })}
              </tbody>
            </TickTable>
          </TickArea>
          <PaneTabs>
            <PaneTab>笔</PaneTab>
            <PaneTabLine />
          </PaneTabs>
        </QuotePane>
      </Main>

      <StatusBar>
        {indices.map((x) => (
          <IndexGroup key={x.name}>
            <span>{x.name}</span>
            <IndexPrice $width={x.width}>{x.price}</IndexPrice>
            <IndexChange>{x.change}</IndexChange>
            <IndexVolume>{x.volume}</IndexVolume>
          </IndexGroup>
        ))}
        <StatusRight>
          <Brand>Pob<em>o</em></Brand>
          <svg width="22" height="14" viewBox="0 0 22 14" aria-hidden="true">
            <path d="M1 1.500h9M1.500 2 5.500 6.500 9.500 2M5.500 1v11" fill="none" stroke="#404040" strokeWidth="1.600" />
            <path d="M10 11h2v2h-2zM13 8h2v5h-2zM16 5h2v8h-2zM19 1h2v12h-2z" fill="#404040" />
          </svg>
          <time>11:16</time>
        </StatusRight>
      </StatusBar>
    </Window>
  </>
);

export default App;
